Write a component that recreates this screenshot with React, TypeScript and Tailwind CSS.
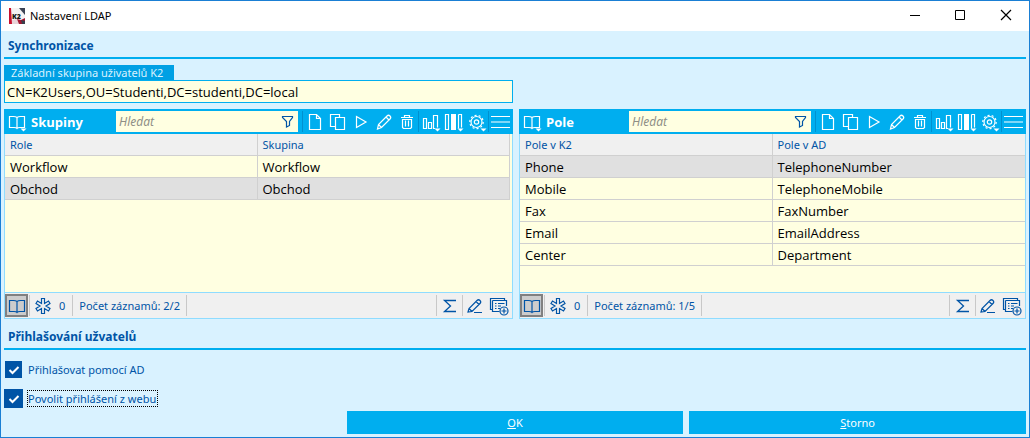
import { useState, type ReactNode } from "react";

type Row = [string, string];

type GridPanelProps = {
  id: string;
  title: string;
  columns: Row;
  rows: Row[];
  selected: number;
  inset?: boolean;
};

type IconProps = { children: ReactNode; size?: string; width?: string };

function Icon({ children, size = "0 0 20 20", width = "w-5" }: IconProps) {
  return (
    <svg
      viewBox={size}
      className={`h-5 shrink-0 ${width}`}
      fill="none"
      stroke="currentColor"
      strokeWidth="1.2"
      aria-hidden="true"
    >
      {children}
    </svg>
  );
}

function BookShape() {
  return <path d="M10 5.500C9 4.700 8 4.500 6.500 4.500H2.500V15.500H7C8.500 15.500 9.500 15.800 10 16.500C10.500 15.800 11.500 15.500 13 15.500H17.500V4.500H13.500C12 4.500 11 4.700 10 5.500V16.500" />;
}

function Caret() {
  return <path d="M13.500 16.500H19.500L16.500 19.500Z" fill="currentColor" stroke="none" />;
}

const editTools: { label: string; icon: ReactNode }[] = [
  {
    label: "Nový",
    icon: <path d="M4.500 2.500H11.500L15.500 6.500V17.500H4.500ZM11.500 2.500V6.500H15.500" />,
  },
  {
    label: "Kopírovat",
    icon: <path d="M7.500 14.500H2.500V2.500H11.500V5M7.500 5.500H16.500V17.500H7.500Z" />,
  },
  { label: "Spustit", icon: <path d="M5.500 4.500V15.500L15 10Z" /> },
  {
    label: "Upravit",
    icon: <path d="M3.500 17L4.500 12.500L13 4C14 3 15 3 16 4C17 5 17 6 16 7L7.500 15.500ZM4.500 12.500L7.500 15.500M12 5L15 8" />,
  },
  {
    label: "Smazat",
    icon: (
      <path d="M4 5.500H16M7.500 5.500V3.500H12.500V5.500M5.500 7.500V15.500L6.500 16.500H13.500L14.500 15.500V7.500ZM8.500 8.500V14.500M11.500 8.500V14.500" />
    ),
  },
];

const viewTools: { label: string; icon: ReactNode }[] = [
  {
    label: "Grafy",
    icon: (
      <>
        <path d="M2.500 6.500H5.500V16.500H2.500ZM7.500 10.500H10.500V16.500H7.500ZM16.500 15.500V3.500H12.500V16.500H14" />
        <Caret />
      </>
    ),
  },
  {
    label: "Sloupce",
    icon: (
      <>
        <path d="M1.500 2.500H4.500V17.500H1.500ZM14.500 2.500H17.500V15.500M14.500 2.500V16.500" />
        <path d="M7 2H12V18H7Z" fill="currentColor" stroke="none" />
        <Caret />
      </>
    ),
  },
  {
    label: "Nastavení",
    icon: (
      <>
        <circle cx="9.500" cy="10" r="5.500" />
        <circle cx="9.500" cy="10" r="6.700" strokeDasharray="2 2.200" />
        <circle cx="9.500" cy="10" r="2.200" />
        <Caret />
      </>
    ),
  },
];

function ToolButton({ label, children }: { label: string; children: ReactNode }) {
  return (
    <button type="button" aria-label={label} className="flex w-[23px] justify-center">
      <Icon>{children}</Icon>
    </button>
  );
}

function Separator({ className }: { className: string }) {
  return <span className={`h-[21px] w-px shrink-0 ${className}`} />;
}

function Toolbar({ id, title }: { id: string; title: string }) {
  return (
    <div className="flex h-[25px] items-center bg-[#00aeef] pr-[2px] text-white">
      <button type="button" aria-label="Zobrazení" className="ml-[3px]">
        <Icon>
          <BookShape />
          <Caret />
        </Icon>
      </button>
      <h3 className="ml-1 flex-1 font-['Open_Sans',sans-serif] text-[13px] font-bold">{title}</h3>
      <div className="flex h-[21px] w-[182px] items-center bg-[#ffffe1] pr-[2px]">
        <input
          id={`${id}-search`}
          aria-label={`Hledat ${title}`}
          placeholder="Hledat"
          className="w-full min-w-0 flex-1 bg-transparent px-[3px] text-[12px] text-black italic outline-none placeholder:text-[#8f8f86]"
        />
        <button type="button" aria-label="Filtr" className="text-[#0054a6]">
          <Icon width="w-4" size="0 0 16 20">
            <path d="M2.500 4.500H12.500V5.500L9.500 9.500V13.500L6.500 15V9.500L2.500 5.500Z" />
          </Icon>
        </button>
      </div>
      <Separator className="ml-1 bg-[#0091d0]" />
      {editTools.map((tool) => (
        <ToolButton key={tool.label} label={tool.label}>
          {tool.icon}
        </ToolButton>
      ))}
      <Separator className="bg-[#0091d0]" />
      {viewTools.map((tool) => (
        <ToolButton key={tool.label} label={tool.label}>
          {tool.icon}
        </ToolButton>
      ))}
      <Separator className="bg-[#0091d0]" />
      <button type="button" aria-label="Nabídka" className="ml-[2px]">
        <Icon>
          <path d="M0 4.500H19M0 10H19M0 15.500H19" />
        </Icon>
      </button>
    </div>
  );
}

function StatusBar({ text }: { text: string }) {
  return (
    <div className="flex h-[26px] items-center border-t border-[#8fdcff] bg-[#f0f0f0] pr-[3px] text-[#0054a6]">
      <button
        type="button"
        aria-label="Kniha"
        className="flex h-[23px] w-[23px] items-center justify-center border-2 border-[#808080] bg-[#cccccc]"
      >
        <Icon>
          <BookShape />
        </Icon>
      </button>
      <Separator className="ml-px bg-[#c8c8c8]" />
      <button type="button" aria-label="Označené" className="ml-[3px] flex items-center">
        <Icon>
          <path
            d="M8.500 2.500H11.500V7.500L15.500 5L17 7.500L13 10L17 12.500L15.500 15L11.500 12.500V17.500H8.500V12.500L4.500 15L3 12.500L7 10L3 7.500L4.500 5L8.500 7.500Z"
          />
        </Icon>
        <span className="ml-[6px]">0</span>
      </button>
      <Separator className="ml-[7px] bg-[#c8c8c8]" />
      <span className="mx-[6px]">{text}</span>
      <Separator className="bg-[#c8c8c8]" />
      <span className="flex-1" />
      <Separator className="bg-[#c8c8c8]" />
      <button type="button" aria-label="Součet" className="flex w-[25px] justify-center">
        <Icon>
          <path d="M16 4.500H4.500L10.500 10L4.500 15.500H16" strokeWidth="1.300" />
        </Icon>
      </button>
      <Separator className="bg-[#c8c8c8]" />
      <button type="button" aria-label="Upravit pole" className="ml-[2px]">
        <Icon>
          <path d="M3 16L4 12.500L12 4.500C13 3.500 14 3.500 15 4.500C16 5.500 16 6.500 15 7.500L7 15.500ZM4 12.500L7 15.500M11 5.500L14 8.500M9 16.500H17" />
        </Icon>
      </button>
      <button type="button" aria-label="Přidat" className="ml-1">
        <Icon>
          <path d="M3.500 13.500H1.500V2.500H15.500V4.500M3.500 4.500H17.500V10M3.500 4.500V15.500H10.500M6 7.500H7.500M9 7.500H15.500M6 10H7.500M9 10H12M6 12.500H7.500M9 12.500H11" />
          <circle cx="15" cy="15" r="4" />
          <path d="M15 12.500V17.500M12.500 15H17.500" />
        </Icon>
      </button>
    </div>
  );
}

function GridPanel({ id, title, columns, rows, selected, inset }: GridPanelProps) {
  return (
    <section className="flex flex-col">
      <Toolbar id={id} title={title} />
      <div className="flex flex-1 flex-col border border-t-0 border-[#8fdcff] bg-[#ffffe1]">
        <div className={`flex-1 ${inset ? "pr-[2px]" : ""}`}>
          <table className="w-full table-fixed border-separate border-spacing-0">
            <thead>
              <tr className="h-[22px] bg-[#f0f0f0] text-left text-[#0054a6]">
                {columns.map((name, i) => (
                  <th
                    key={name}
                    className={`border-b border-[#d0d0d0] px-[5px] py-0 font-normal ${i === 0 || inset ? "border-r" : ""}`}
                  >
                    {name}
                  </th>
                ))}
              </tr>
            </thead>
            <tbody className="font-['Open_Sans',sans-serif] text-[13px] text-black">
              {rows.map((row, r) => (
                <tr key={row[0]} className={`h-[22px] ${r === selected ? "bg-[#e0e0e0]" : ""}`}>
                  {row.map((cell, i) => (
                    <td
                      key={cell + i}
                      className={`border-b border-[#d0d0d0] px-[5px] py-0 ${i === 0 || inset ? "border-r" : ""}`}
                    >
                      {cell}
                    </td>
                  ))}
                </tr>
              ))}
            </tbody>
          </table>
        </div>
        <StatusBar text={`Počet záznamů: ${selected + 1}/${rows.length}`} />
      </div>
    </section>
  );
}

function SectionTitle({ children }: { children: ReactNode }) {
  return (
    <h2 className="border-b-2 border-[#00aeef] px-1 pb-[2px] text-[12px] leading-[18px] font-bold text-[#0054a6]">
      {children}
    </h2>
  );
}

function CheckOption({ id, label, focused }: { id: string; label: string; focused?: boolean }) {
  const [checked, setChecked] = useState(true);
  return (
    <div className="flex h-[19px] items-center">
      <span className="grid w-[19px] place-items-center">
        <input
          id={id}
          type="checkbox"
          checked={checked}
          onChange={(e) => setChecked(e.target.checked)}
          className={`col-start-1 row-start-1 appearance-none border border-[#0054a6] bg-[#ffffe1] checked:bg-[#0054a6] ${focused ? "size-[19px]" : "size-[17px]"}`}
        />
        {checked && (
          <svg
            viewBox="0 0 12 12"
            className="pointer-events-none col-start-1 row-start-1 size-3"
            fill="none"
            stroke="#ffffff"
            strokeWidth="2"
            aria-hidden="true"
          >
            <path d="M1.500 6L4.500 9L10.500 3" />
          </svg>
        )}
      </span>
      <label
        htmlFor={id}
        className={`ml-1 border border-dotted pr-px leading-[15px] ${focused ? "border-black" : "border-transparent"}`}
      >
        {label}
      </label>
    </div>
  );
}

function Logo() {
  return (
    <svg viewBox="0 0 16 16" className="size-4" aria-hidden="true">
      <path d="M0 0H16V16H0Z" fill="#f4f2f3" />
      <path d="M0 0H2L3 16H0Z" fill="#c8102e" />
      <path d="M3 12L8 11L11 16H3Z" fill="#e9d3d8" />
      <path d="M8 11L12 12L16 10V16H10Z" fill="#a31631" />
      <path d="M12 12L16 13V16H13Z" fill="#3a3f4c" />
      <path d="M10 0H16V7Z" fill="#3b4254" />
      <text x="3" y="10.500" fontSize="7" fontWeight="900" fontFamily="Noto Sans, sans-serif" fill="#111111">
        K2
      </text>
    </svg>
  );
}

export default function App() {
  return (
    <main className="flex min-h-screen flex-col border border-[#1a7fd4] bg-[#d9f2ff] font-['Noto_Sans',sans-serif] text-[11px] leading-4 text-[#0054a6]">
      <header className="flex h-[30px] items-center bg-white pl-2 text-black">
        <Logo />
        <h1 className="ml-[5px] flex-1">Nastavení LDAP</h1>
        <div className="flex">
          <button type="button" aria-label="Minimalizovat" className="flex w-[45px] justify-center">
            <Icon>
              <path d="M5 9.500H15" strokeWidth="1" />
            </Icon>
          </button>
          <button type="button" aria-label="Maximalizovat" className="flex w-[46px] justify-center">
            <Icon>
              <path d="M5.500 4.500H14.500V13.500H5.500Z" strokeWidth="1" />
            </Icon>
          </button>
          <button type="button" aria-label="Zavřít" className="flex w-[46px] justify-center">
            <Icon>
              <path d="M5 4L15 14M15 4L5 14" strokeWidth="1.200" />
            </Icon>
          </button>
        </div>
      </header>

      <div className="flex flex-1 flex-col px-[3px] pt-[6px] pb-[3px]">
        <SectionTitle>Synchronizace</SectionTitle>

        <div className="mt-[6px] grid grid-cols-[509fr_507fr] gap-[6px]">
          <div className="flex flex-col items-start">
            <label
              htmlFor="base-group"
              className="h-[15px] w-[170px] bg-[#00a0e4] px-[7px] leading-[15px] whitespace-nowrap text-[#d9f2ff]"
            >
              Základní skupina uživatelů K2
            </label>
            <input
              id="base-group"
              defaultValue="CN=K2Users,OU=Studenti,DC=studenti,DC=local"
              className="h-[23px] w-full border border-[#00aeef] bg-[#ffffe1] px-[2px] font-['Open_Sans',sans-serif] text-[13px] text-black outline-none"
            />
          </div>
        </div>

        <div className="mt-[6px] grid flex-1 grid-cols-[509fr_507fr] gap-[6px]">
          <GridPanel
            id="groups"
            title="Skupiny"
            columns={["Role", "Skupina"]}
            rows={[
              ["Workflow", "Workflow"],
              ["Obchod", "Obchod"],
            ]}
            selected={1}
            inset
          />
          <GridPanel
            id="fields"
            title="Pole"
            columns={["Pole v K2", "Pole v AD"]}
            rows={[
              ["Phone", "TelephoneNumber"],
              ["Mobile", "TelephoneMobile"],
              ["Fax", "FaxNumber"],
              ["Email", "EmailAddress"],
              ["Center", "Department"],
            ]}
            selected={0}
          />
        </div>

        <div className="mt-[9px]">
          <SectionTitle>Přihlašování užvatelů</SectionTitle>
        </div>
        <div className="mt-[10px] flex flex-col gap-[10px]">
          <CheckOption id="login-ad" label="Přihlašovat pomocí AD" />
          <CheckOption id="login-web" label="Povolit přihlášení z webu" focused />
        </div>

        <div className="mt-[3px] grid grid-cols-3 gap-[6px] text-white">
          <button type="button" className="col-start-2 h-[23px] bg-[#00aeef]">
            <u>O</u>K
          </button>
          <button type="button" className="h-[23px] bg-[#00aeef]">
            <u>S</u>torno
          </button>
        </div>
      </div>
    </main>
  );
}
